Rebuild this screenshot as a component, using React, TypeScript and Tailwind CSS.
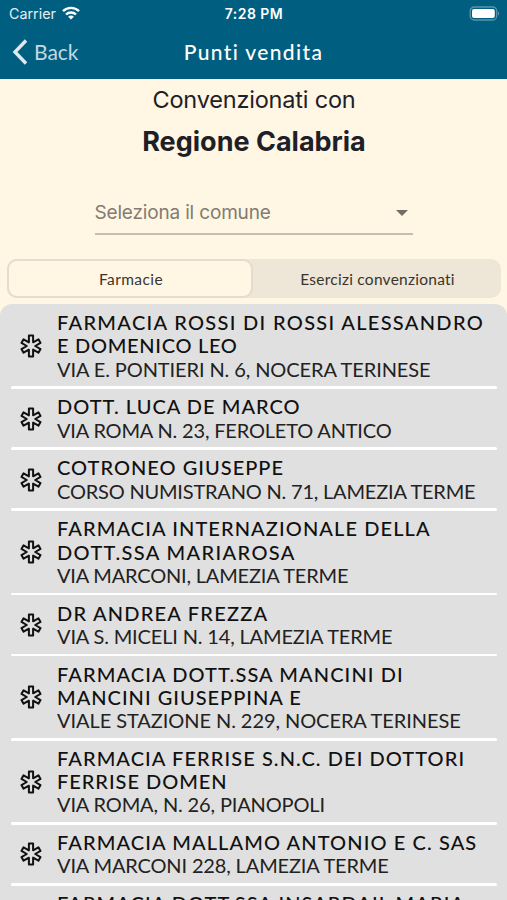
import { useState } from 'react'

type Riga = {
  testo: string
  spazio: string
}

type PuntoVendita = {
  nome: Riga[]
  indirizzo?: Riga
}

const FARMACIE: PuntoVendita[] = [
  {
    nome: [
      { testo: 'FARMACIA ROSSI DI ROSSI ALESSANDRO', spazio: 'tracking-[1.32px]' },
      { testo: 'E DOMENICO LEO', spazio: 'tracking-[0.7px]' },
    ],
    indirizzo: { testo: 'VIA E. PONTIERI N. 6, NOCERA TERINESE', spazio: 'tracking-[-0.1px]' },
  },
  {
    nome: [{ testo: 'DOTT. LUCA DE MARCO', spazio: 'tracking-[1.02px]' }],
    indirizzo: { testo: 'VIA ROMA N. 23, FEROLETO ANTICO', spazio: 'tracking-[-0.18px]' },
  },
  {
    nome: [{ testo: 'COTRONEO GIUSEPPE', spazio: 'tracking-[1.02px]' }],
    indirizzo: { testo: 'CORSO NUMISTRANO N. 71, LAMEZIA TERME', spazio: 'tracking-[-0.2px]' },
  },
  {
    nome: [
      { testo: 'FARMACIA INTERNAZIONALE DELLA', spazio: 'tracking-[1.1px]' },
      { testo: 'DOTT.SSA MARIAROSA', spazio: 'tracking-[1.37px]' },
    ],
    indirizzo: { testo: 'VIA MARCONI, LAMEZIA TERME', spazio: 'tracking-[-0.19px]' },
  },
  {
    nome: [{ testo: 'DR ANDREA FREZZA', spazio: 'tracking-[1.23px]' }],
    indirizzo: { testo: 'VIA S. MICELI N. 14, LAMEZIA TERME', spazio: 'tracking-[-0.16px]' },
  },
  {
    nome: [
      { testo: 'FARMACIA DOTT.SSA MANCINI DI', spazio: 'tracking-[1.1px]' },
      { testo: 'MANCINI GIUSEPPINA E', spazio: 'tracking-[1px]' },
    ],
    indirizzo: { testo: 'VIALE STAZIONE N. 229, NOCERA TERINESE', spazio: 'tracking-[-0.07px]' },
  },
  {
    nome: [
      { testo: 'FARMACIA FERRISE S.N.C. DEI DOTTORI', spazio: 'tracking-[1.08px]' },
      { testo: 'FERRISE DOMEN', spazio: 'tracking-[0.97px]' },
    ],
    indirizzo: { testo: 'VIA ROMA, N. 26, PIANOPOLI', spazio: 'tracking-[-0.14px]' },
  },
  {
    nome: [{ testo: 'FARMACIA MALLAMO ANTONIO E C. SAS', spazio: 'tracking-[1.1px]' }],
    indirizzo: { testo: 'VIA MARCONI 228, LAMEZIA TERME', spazio: 'tracking-[-0.15px]' },
  },
  {
    nome: [{ testo: 'FARMACIA DOTT.SSA INSARDAIL MARIA', spazio: 'tracking-[1.05px]' }],
  },
]

function Asterisco() {
  return (
    <svg viewBox="-12 -12 24 24" className="w-6 h-6 shrink-0" fill="none" stroke="#111" strokeWidth="2" strokeLinejoin="round">
      <path d="M-2.1-10.4H2.1V-3.64L7.44-6.72 9.54-3.08 4.2 0 9.54 3.08 7.44 6.72 2.1 3.64V10.4H-2.1V3.64L-7.44 6.72-9.54 3.08-4.2 0-9.54-3.08-7.44-6.72-2.1-3.64Z" />
    </svg>
  )
}

function Voce({ punto }: { punto: PuntoVendita }) {
  return (
    <li className="ml-[11px] mr-[10px]">
      <div className="flex items-center pl-2 pt-[6.2px] pb-[5.5px]">
        <Asterisco />
        <div className="ml-[14px] min-h-[46.6px] whitespace-nowrap text-[20px] leading-[23.3px] text-[#111]">
          {punto.nome.map(r => (
            <p key={r.testo} className={`font-medium ${r.spazio}`}>{r.testo}</p>
          ))}
          {punto.indirizzo && (
            <p className={`text-[#222] ${punto.indirizzo.spazio}`}>{punto.indirizzo.testo}</p>
          )}
        </div>
      </div>
      <div className="h-[2.7px] rounded-full bg-white" />
    </li>
  )
}

export default function App() {
  const [aba, setAba] = useState<'farmacie' | 'esercizi'>('farmacie')

  return (
    <div className="w-full h-[900px] overflow-hidden bg-[#fff6e4] font-['Lato',sans-serif]">
      {/* Barra di stato e navigazione */}
      <header className="h-[79px] bg-[#005f80] text-white">
        <div className="h-[27px] grid grid-cols-3 items-center pl-2 pr-[7px] font-['Inter',sans-serif]">
          <div className="flex items-center gap-[6px] pl-px text-[14.3px] text-[#e3eef2]">
            <span>Carrier</span>
            <svg viewBox="0 0 18 14" className="w-[18px] h-[14px] -mt-0.5" fill="none" stroke="#fff" strokeWidth="2.4">
              <path d="M1 5.2C5.5.8 12.5.8 17 5.2" />
              <path d="M4 8.5C6.8 5.8 11.2 5.8 14 8.5" />
              <path d="M9 13.6 6.1 10.7C7.7 9.2 10.3 9.2 11.9 10.7Z" fill="#fff" stroke="none" />
            </svg>
          </div>
          <p className="text-center text-[14px] font-semibold tracking-[0.45px]">7:28 PM</p>
          <svg viewBox="0 0 31 15" className="w-[31px] h-[15px] justify-self-end">
            <rect x="1.2" y="1" width="26.5" height="13" rx="4" fill="none" stroke="#5a95ab" strokeWidth="1.3" />
            <rect x="3" y="2.9" width="22.8" height="9.2" rx="2" fill="#fff" />
            <path d="M29 5.5C30.6 6 30.6 9 29 9.5Z" fill="#5a95ab" />
          </svg>
        </div>
        <div className="h-[50px] grid grid-cols-3 items-center px-3">
          <button className="flex items-center gap-[6px] text-[21px] text-[#c3d8e0]">
            <svg viewBox="0 0 16 26" className="w-4 h-[26px]" fill="none" stroke="#dfe9ee" strokeWidth="3.4">
              <path d="M14 1.5 3 13 14 24.5" />
            </svg>
            Back
          </button>
          <h1 className="text-center whitespace-nowrap text-[21px] font-medium tracking-[1.35px]">Punti vendita</h1>
        </div>
      </header>

      <section className="h-[180px] flex flex-col items-center font-['Inter',sans-serif] text-[#1d2026]">
        <p className="mt-[5px] pl-px text-[23.5px] leading-8 tracking-[-0.2px]">Convenzionati con</p>
        <h2 className="mt-[8px] pl-px text-[27px] leading-9 font-bold">Regione Calabria</h2>
        <div className="mt-[39px] w-[318px] h-[36px] border-b-2 border-[#c5bdaf] flex items-start justify-between pr-[5px] text-[#827c72]">
          <span className="text-[19px] leading-7 tracking-[-0.17px]">Seleziona il comune</span>
          <svg viewBox="0 0 12 6" className="w-3 h-[6px] mt-[11px]" fill="#736e65">
            <path d="M0 0H12L6 6Z" />
          </svg>
        </div>
      </section>

      {/* Selettore */}
      <div className="ml-[7px] mr-[6px] h-[39px] rounded-[10px] bg-[#eee6d6] flex text-[15.5px] text-[#38352f]">
        <button onClick={() => setAba('farmacie')} className="w-[246px] pt-0.5 pl-0.5 rounded-[10px] border-2 border-[#e5dccb] bg-[#fff6e4] tracking-[0.4px]">
          Farmacie
        </button>
        <button onClick={() => setAba('esercizi')} className="flex-1 pt-0.5 pl-px tracking-[0.25px]">
          Esercizi convenzionati
        </button>
      </div>

      <ul className="mt-[6px] pt-[0.9px] rounded-t-xl bg-[#e0e0e0]">
        {aba === 'farmacie' && FARMACIE.map(p => <Voce key={p.nome[0].testo} punto={p} />)}
      </ul>
    </div>
  )
}
